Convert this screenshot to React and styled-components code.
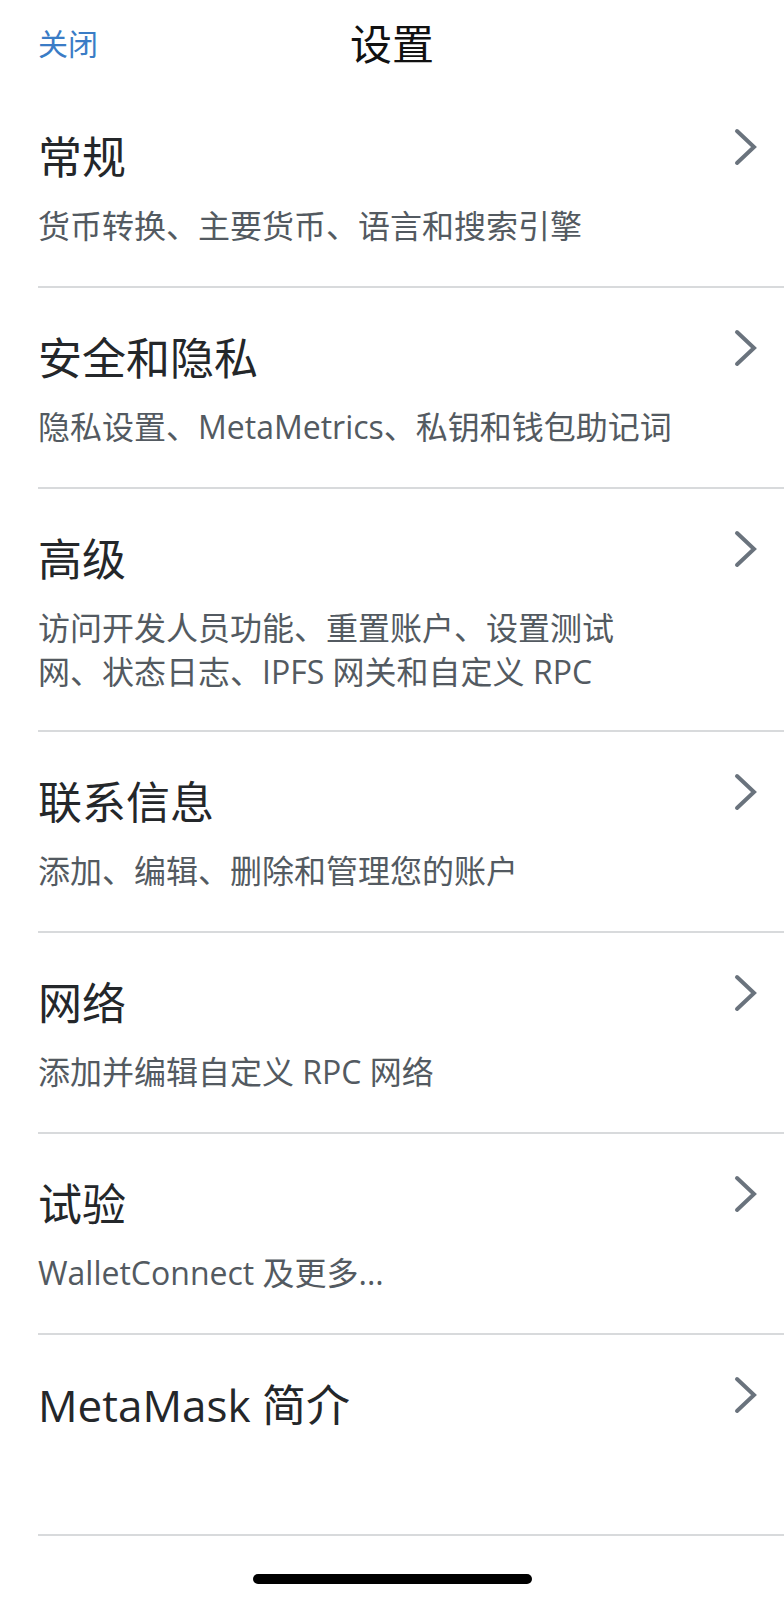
import React from "react";
import styled, { createGlobalStyle } from "styled-components";

const GlobalStyle = createGlobalStyle`
  html, body {
    margin: 0;
    padding: 0;
    background: #ffffff;
  }
  body {
    font-family: "Open Sans", "Noto Sans CJK SC", sans-serif;
    -webkit-font-smoothing: antialiased;
  }
`;

// 设置项目列表
const items = [
  { title: "常规", desc: "货币转换、主要货币、语言和搜索引擎" },
  { title: "安全和隐私", desc: "隐私设置、MetaMetrics、私钥和钱包助记词" },
  {
    title: "高级",
    desc: "访问开发人员功能、重置账户、设置测试\n网、状态日志、IPFS 网关和自定义 RPC",
  },
  { title: "联系信息", desc: "添加、编辑、删除和管理您的账户" },
  { title: "网络", desc: "添加并编辑自定义 RPC 网络" },
  { title: "试验", desc: "WalletConnect 及更多..." },
  { title: "MetaMask 简介", desc: "" },
];

const Chevron = () => (
  <ChevronIcon width="24" height="38" viewBox="0 0 24 38">
    <polyline
      points="3,3 20,19 3,35"
      fill="none"
      stroke="#6a737d"
      strokeWidth="4"
      strokeLinecap="round"
      strokeLinejoin="miter"
    />
  </ChevronIcon>
);

const App = () => {
  return (
    <Page>
      <GlobalStyle />
      <Header>
        <CloseLink>关闭</CloseLink>
        <HeaderTitle>设置</HeaderTitle>
        <span />
      </Header>
      <List>
        {items.map(item => (
          <Row key={item.title}>
            <TextBlock>
              <Title>{item.title}</Title>
              {item.desc && <Desc>{item.desc}</Desc>}
            </TextBlock>
            <Chevron />
          </Row>
        ))}
      </List>
      <HomeBar />
    </Page>
  );
};

const Page = styled.div`
  width: 784px;
  min-height: 1600px;
  display: flex;
  flex-direction: column;
  background: #ffffff;
`;

const Header = styled.div`
  height: 87px;
  display: grid;
  grid-template-columns: 1fr auto 1fr;
  align-items: center;
  padding: 0 38px;
  box-sizing: border-box;
`;

const CloseLink = styled.span`
  font-size: 30px;
  line-height: 1;
  color: #3a7cc6;
  justify-self: start;
  margin-top: 1px;
`;

const HeaderTitle = styled.h1`
  margin: 0;
  font-size: 42px;
  font-weight: 400;
  line-height: 1;
  color: #111111;
`;

const List = styled.div`
  margin-left: 38px;
  display: flex;
  flex-direction: column;
`;

const Row = styled.div`
  min-height: 201px;
  box-sizing: border-box;
  display: flex;
  align-items: flex-start;
  justify-content: space-between;
  padding: 44px 26px 36px 0;
  border-bottom: 2px solid #d8dadc;
`;

const TextBlock = styled.div`
  display: flex;
  flex-direction: column;
`;

const Title = styled.div`
  font-size: 44px;
  line-height: 52px;
  color: #24272a;
`;

const Desc = styled.div`
  margin-top: 21px;
  font-size: 32px;
  line-height: 44px;
  color: #535a61;
  white-space: pre-line;
`;

const ChevronIcon = styled.svg`
  flex-shrink: 0;
  margin-top: -3px;
`;

const HomeBar = styled.div`
  width: 279px;
  height: 10px;
  border-radius: 5px;
  background: #000000;
  align-self: center;
  margin-top: 38px;
`;

export default App;
